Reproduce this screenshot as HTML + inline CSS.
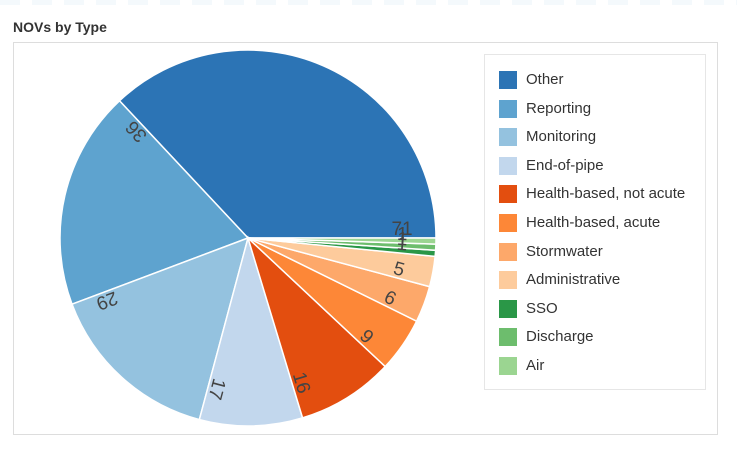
<!DOCTYPE html>
<html><head><meta charset="utf-8"><style>
body{margin:0;width:737px;height:476px;background:#fff;position:relative;overflow:hidden;font-family:"Liberation Sans",Arial,sans-serif;}
.top{position:absolute;left:0;top:0;width:737px;height:5px;background:repeating-linear-gradient(90deg,#f4f9fc 0 20px,#fff 20px 32px);}
.title{position:absolute;left:13px;top:19px;font-size:14px;font-weight:bold;color:#333;}
.box{position:absolute;left:13px;top:42px;width:705px;height:393px;border:1px solid #ddd;box-sizing:border-box;}
.legend{position:absolute;left:484px;top:54px;width:222px;height:336px;border:1px solid #e6e6e6;box-sizing:border-box;}
.li{position:absolute;left:14px;height:18px;font-size:15px;color:#333;line-height:18px;}
.li i{position:absolute;left:0;top:0;width:18px;height:18px;}
.li span{position:absolute;left:27px;top:0px;white-space:nowrap;}
svg{position:absolute;left:0;top:0;}
</style></head><body>
<div class="top"></div>
<div class="title">NOVs by Type</div>
<div class="box"></div>
<svg width="737" height="476" id="pie">
<g id="slices"></g>
<g font-family="Liberation Sans, Arial, sans-serif" font-size="19" fill="#444" text-anchor="middle">
<text transform="translate(248,238) rotate(0) translate(154,-3)">71</text>
<text transform="translate(248,238) rotate(227) translate(154,-3)">36</text>
<text transform="translate(248,238) rotate(159.4) translate(154,-3)">29</text>
<text transform="translate(248,238) rotate(105) translate(154,-3)">17</text>
<text transform="translate(248,238) rotate(73.1) translate(154,-3)">16</text>
<text transform="translate(248,238) rotate(43.1) translate(154,-3)">9</text>
<text transform="translate(248,238) rotate(26.25) translate(154,-3)">6</text>
<text transform="translate(248,238) rotate(15) translate(154,-3)">5</text>
<text transform="translate(248,238) rotate(5.6) translate(154,-3)">1</text>
<text transform="translate(248,238) rotate(3.75) translate(154,-3)">1</text>
<text transform="translate(248,238) rotate(1.9) translate(154,-3)">1</text>
</g>
</svg>
<div class="legend">
<div class="li" style="top:16px"><i style="background:#2c74b5"></i><span>Other</span></div>
<div class="li" style="top:44.6px"><i style="background:#5ea3cf"></i><span>Reporting</span></div>
<div class="li" style="top:73.2px"><i style="background:#94c2df"></i><span>Monitoring</span></div>
<div class="li" style="top:101.8px"><i style="background:#c2d7ed"></i><span>End-of-pipe</span></div>
<div class="li" style="top:130.4px"><i style="background:#e34e0f"></i><span>Health-based, not acute</span></div>
<div class="li" style="top:159px"><i style="background:#fd8737"></i><span>Health-based, acute</span></div>
<div class="li" style="top:187.6px"><i style="background:#fda86a"></i><span>Stormwater</span></div>
<div class="li" style="top:216.2px"><i style="background:#fdcb9c"></i><span>Administrative</span></div>
<div class="li" style="top:244.8px"><i style="background:#2a9747"></i><span>SSO</span></div>
<div class="li" style="top:273.4px"><i style="background:#6dbd6d"></i><span>Discharge</span></div>
<div class="li" style="top:302px"><i style="background:#9bd591"></i><span>Air</span></div>
</div>
<script>
var v=[71,36,29,17,16,9,6,5,1,1,1],c=["#2c74b5","#5ea3cf","#94c2df","#c2d7ed","#e34e0f","#fd8737","#fda86a","#fdcb9c","#2a9747","#6dbd6d","#9bd591"];
var t=192,a=0,cx=248,cy=238,r=188,g=document.getElementById("slices"),s="";
for(var i=0;i<v.length;i++){var b=a+v[i]/t*2*Math.PI;
var x1=cx+r*Math.cos(a),y1=cy-r*Math.sin(a),x2=cx+r*Math.cos(b),y2=cy-r*Math.sin(b);
s+='<path d="M'+cx+','+cy+'L'+x1+','+y1+'A'+r+','+r+' 0 '+((b-a)>Math.PI?1:0)+' 0 '+x2+','+y2+'Z" fill="'+c[i]+'" stroke="#fff" stroke-width="1.5"/>';a=b;}
g.innerHTML=s;
</script>
</body></html>
